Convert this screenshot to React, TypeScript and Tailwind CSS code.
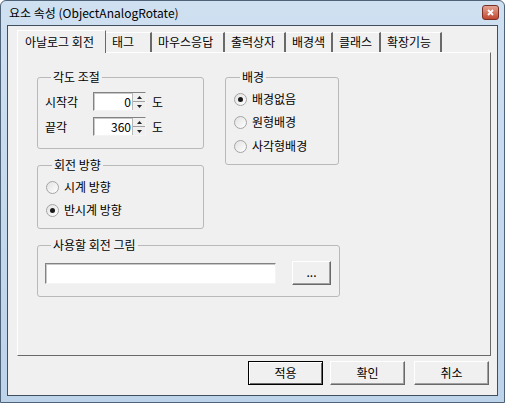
import React from 'react';

const font = { fontFamily: '"Noto Sans CJK KR", "Noto Sans", sans-serif' };

const tabs = [
  { name: '아날로그 회전', w: 'w-[89px]' },
  { name: '태그', w: 'w-[46px]' },
  { name: '마우스응답', w: 'w-[73px]' },
  { name: '출력상자', w: 'w-[61px]' },
  { name: '배경색', w: 'w-[47px]' },
  { name: '클래스', w: 'w-[48px]' },
  { name: '확장기능', w: 'w-[61px]' },
];

const Radio: React.FC<{ label: string; checked?: boolean }> = ({ label, checked }) => (
  <div className="flex items-center h-[16px]">
    <span className="flex items-center justify-center w-[13px] h-[13px] rounded-full border border-[#a4a4a4] bg-gradient-to-br from-[#e2e2e2] to-[#ffffff]">
      {checked && <span className="w-[5px] h-[5px] rounded-full bg-[#1a1a1a]" />}
    </span>
    <span className="ml-[5px] text-[12px] leading-[16px] text-black">{label}</span>
  </div>
);

const Group: React.FC<{ title: string; className?: string; children: React.ReactNode }> = ({
  title,
  className,
  children,
}) => (
  <fieldset className={'border border-[#b9b9b9] rounded-[3px] ' + (className || '')}>
    <legend className="ml-[6px] px-[2px] text-[12px] leading-[14px] text-black">{title}</legend>
    {children}
  </fieldset>
);

const Spin: React.FC<{ value: string }> = ({ value }) => (
  <div className="flex w-[53px] h-[19px] bg-white border-t border-l border-[#828282] border-b border-r border-b-[#f4f4f4] border-r-[#f4f4f4] shadow-[inset_1px_1px_0_#c8c8c8]">
    <div className="flex-1 text-right pr-[1px] text-[12px] leading-[17px] text-black">{value}</div>
    <div className="flex flex-col w-[13px] h-full bg-[#f0f0f0] border-l border-[#b8b8b8]">
      <div className="flex-1 flex items-center justify-center border-b border-[#a0a0a0]">
        <svg width="5" height="3" viewBox="0 0 5 3">
          <path d="M2.5 0L5 3H0z" fill="#222" />
        </svg>
      </div>
      <div className="flex-1 flex items-center justify-center">
        <svg width="5" height="3" viewBox="0 0 5 3">
          <path d="M0 0h5L2.5 3z" fill="#222" />
        </svg>
      </div>
    </div>
  </div>
);

const Btn: React.FC<{ label: string; focused?: boolean; className?: string }> = ({ label, focused, className }) => (
  <button
    className={
      'flex items-center justify-center bg-[#f0f0f0] text-[12px] text-black ' +
      (focused
        ? 'border border-black shadow-[inset_1px_1px_0_#ffffff,inset_-1px_-1px_0_#696969] '
        : 'border-t border-l border-t-white border-l-white border-b border-r border-b-[#696969] border-r-[#696969] shadow-[inset_-1px_-1px_0_#a0a0a0] ') +
      (className || '')
    }
  >
    {label}
  </button>
);

export default function App() {
  return (
    <div
      style={font}
      className="w-[505px] h-[403px] flex flex-col bg-gradient-to-b from-[#cfe0f1] to-[#bdd3ea] border border-[#4e6378] rounded-t-[6px] px-[6px] pb-[6px]"
    >
      {/* title bar */}
      <div className="h-[24px] flex items-center justify-between">
        <span className="ml-[2px] text-[12px] text-black">요소 속성 (ObjectAnalogRotate)</span>
        <div className="mr-[-1px] mb-[1px] w-[17px] h-[15px] rounded-[3px] border border-[#7a2f25] bg-gradient-to-b from-[#e3a393] to-[#c2442f] flex items-center justify-center">
          <svg width="7" height="7" viewBox="0 0 7 7">
            <path d="M1 1l5 5M6 1l-5 5" stroke="#fff" strokeWidth="1.8" />
          </svg>
        </div>
      </div>

      {/* client area */}
      <div className="flex-1 flex flex-col bg-[#f0f0f0] border border-[#3f4f5e] pl-[9px] pt-[3px]">
        {/* tab row */}
        <div className="flex items-end h-[23px]">
          {tabs.map((t, i) =>
            i === 0 ? (
              <div
                key={t.name}
                className={`${t.w} h-[23px] pl-[7px] pt-[2px] text-[12px] leading-[18px] text-black bg-[#f0f0f0] border-t border-l border-white border-r border-r-[#696969] -mb-[1px] relative z-10`}
              >
                {t.name}
              </div>
            ) : (
              <div
                key={t.name}
                className={`${t.w} h-[20px] pl-[6px] text-[12px] leading-[18px] text-black border-t border-white border-r-2 border-r-[#696969]`}
              >
                {t.name}
              </div>
            )
          )}
        </div>

        {/* tab page */}
        <div className="w-[474px] h-[304px] border-t border-l border-white border-b border-r border-b-[#696969] border-r-[#696969] pl-[19px] pt-[17px]">
          <div className="flex">
            <div className="w-[167px] flex flex-col">
              <Group title="각도 조절" className="h-[79px] px-[7px] pt-[8px]">
                <div className="flex items-center h-[19px]">
                  <span className="w-[48px] text-[12px] text-black">시작각</span>
                  <Spin value="0" />
                  <span className="ml-[6px] text-[12px] text-black">도</span>
                </div>
                <div className="flex items-center h-[19px] mt-[6px]">
                  <span className="w-[48px] text-[12px] text-black">끝각</span>
                  <Spin value="360" />
                  <span className="ml-[6px] text-[12px] text-black">도</span>
                </div>
              </Group>
              <Group title="회전 방향" className="h-[71px] mt-[9px] px-[8px] pt-[7px]">
                <Radio label="시계 방향" />
                <div className="mt-[7px]">
                  <Radio label="반시계 방향" checked />
                </div>
              </Group>
            </div>
            <div className="ml-[21px] w-[114px]">
              <Group title="배경" className="h-[95px] px-[8px] pt-[7px]">
                <Radio label="배경없음" checked />
                <div className="mt-[7px]">
                  <Radio label="원형배경" />
                </div>
                <div className="mt-[8px]">
                  <Radio label="사각형배경" />
                </div>
              </Group>
            </div>
          </div>

          <Group title="사용할 회전 그림" className="w-[303px] h-[59px] mt-[9px] px-[7px] pt-[9px]">
            <div className="flex items-center">
              <div className="w-[231px] h-[21px] bg-white border-t border-l border-[#828282] border-b border-r border-b-[#f4f4f4] border-r-[#f4f4f4] shadow-[inset_1px_1px_0_#c8c8c8]" />
              <Btn label="..." className="ml-[16px] w-[39px] h-[24px] leading-[14px] pb-[3px]" />
            </div>
          </Group>
        </div>

        {/* dialog buttons */}
        <div className="flex mt-[5px] pl-[231px]">
          <Btn label="적용" focused className="w-[75px] h-[24px]" />
          <Btn label="확인" className="ml-[7px] w-[75px] h-[24px]" />
          <Btn label="취소" className="ml-[9px] w-[75px] h-[24px]" />
        </div>
      </div>
    </div>
  );
}
